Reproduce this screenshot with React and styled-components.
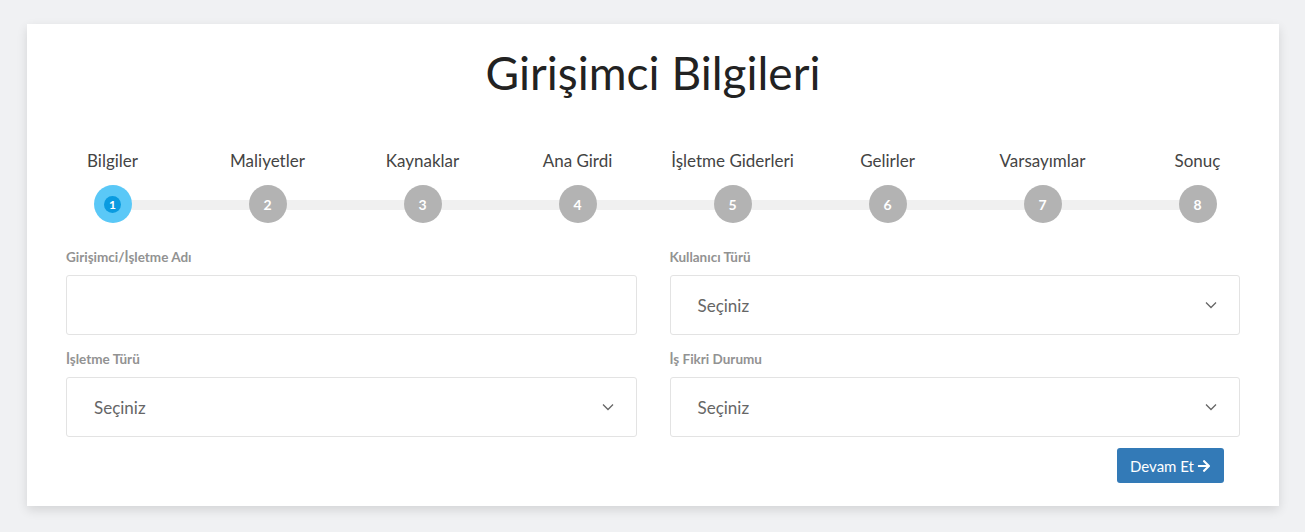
import React from 'react';
import styled, { createGlobalStyle } from 'styled-components';

const GlobalStyle = createGlobalStyle`
  body {
    margin: 0;
    background: #f0f1f3;
    font-family: Lato, "Noto Sans", sans-serif;
  }
`;

const steps = ['Bilgiler', 'Maliyetler', 'Kaynaklar', 'Ana Girdi', 'İşletme Giderleri', 'Gelirler', 'Varsayımlar', 'Sonuç'];

const Page = styled.div`
  padding: 24px 26px 27px 27px;
`;

const Card = styled.div`
  background: #fff;
  box-shadow: 0 4px 10px rgba(0, 0, 0, 0.12);
  padding: 20px 39px 23px 39px;
`;

const Title = styled.h1`
  margin: 0;
  text-align: center;
  font-weight: 400;
  font-size: 46px;
  line-height: 58px;
  color: #222;
`;

const Stepper = styled.ol`
  list-style: none;
  margin: 48px -35px 0 -31px;
  padding: 0;
  display: grid;
  grid-template-columns: repeat(8, 155px);
`;

const Step = styled.li`
  position: relative;
  display: flex;
  flex-direction: column;
  align-items: center;

  &:not(:last-child)::after {
    content: '';
    position: absolute;
    left: 50%;
    width: 100%;
    top: 50px;
    height: 10px;
    background: #f0f0f0;
    z-index: 0;
  }
`;

const StepLabel = styled.span`
  font-size: 17px;
  color: #444;
  line-height: 22px;
  white-space: nowrap;
`;

const Dot = styled.span`
  position: relative;
  z-index: 1;
  margin-top: 13px;
  width: 38px;
  height: 38px;
  border-radius: 50%;
  background: ${(p) => (p.$active ? '#5ac8f7' : '#b3b3b3')};
  color: #fff;
  font-weight: 700;
  font-size: 14px;
  display: flex;
  align-items: center;
  justify-content: center;
`;

const ActiveNum = styled.span`
  width: 17px;
  height: 17px;
  border-radius: 50%;
  background: #0a9be0;
  display: flex;
  align-items: center;
  justify-content: center;
  font-size: 12px;
`;

const Form = styled.div`
  display: grid;
  grid-template-columns: 1fr 1fr;
  column-gap: 33px;
  row-gap: 16px;
  margin-top: 26px;
`;

const Field = styled.div`
  display: flex;
  flex-direction: column;
`;

const Label = styled.label`
  font-size: 13.5px;
  font-weight: 700;
  color: #929292;
  line-height: 16px;
  margin-bottom: 10px;
`;

const Box = styled.div`
  height: 60px;
  box-sizing: border-box;
  border: 1px solid #e3e3e3;
  border-radius: 3px;
  display: flex;
  align-items: center;
  justify-content: space-between;
  padding: 0 22px 0 27px;
  color: #666;
  font-size: 17px;
`;

const Footer = styled.div`
  display: flex;
  justify-content: flex-end;
  padding: 11px 16px 0 0;
`;

const Button = styled.button`
  background: #337ab7;
  color: #fff;
  border: none;
  border-radius: 3px;
  height: 35px;
  padding: 0 13px;
  font-family: inherit;
  font-size: 15px;
  display: flex;
  align-items: center;
  gap: 3px;
`;

const Chevron = () => (
  <svg width="12" height="8" viewBox="0 0 12 8" fill="none" stroke="#666" strokeWidth="1.3">
    <path d="M1 1.5l5 5 5-5" />
  </svg>
);

const Arrow = () => (
  <svg width="14" height="14" viewBox="0 0 448 512" fill="#fff">
    <path d="M190.5 66.9l22.2-22.2c9.4-9.4 24.6-9.4 33.9 0L441 239c9.4 9.4 9.4 24.6 0 33.9L246.6 467.3c-9.4 9.4-24.6 9.4-33.9 0l-22.2-22.2c-9.5-9.5-9.3-25 .4-34.3L311.4 296H24c-13.3 0-24-10.7-24-24v-32c0-13.3 10.7-24 24-24h287.4L190.9 101.2c-9.8-9.3-10-24.8-.4-34.3z" />
  </svg>
);

const Select = () => (
  <Box>
    <span>Seçiniz</span>
    <Chevron />
  </Box>
);

export default function App() {
  return (
    <Page>
      <GlobalStyle />
      <Card>
        <Title>Girişimci Bilgileri</Title>
        <Stepper>
          {steps.map((s, i) => (
            <Step key={s}>
              <StepLabel>{s}</StepLabel>
              <Dot $active={i === 0}>{i === 0 ? <ActiveNum>1</ActiveNum> : i + 1}</Dot>
            </Step>
          ))}
        </Stepper>
        <Form>
          <Field>
            <Label>Girişimci/İşletme Adı</Label>
            <Box />
          </Field>
          <Field>
            <Label>Kullanıcı Türü</Label>
            <Select />
          </Field>
          <Field>
            <Label>İşletme Türü</Label>
            <Select />
          </Field>
          <Field>
            <Label>İş Fikri Durumu</Label>
            <Select />
          </Field>
        </Form>
        <Footer>
          <Button>
            Devam Et <Arrow />
          </Button>
        </Footer>
      </Card>
    </Page>
  );
}
